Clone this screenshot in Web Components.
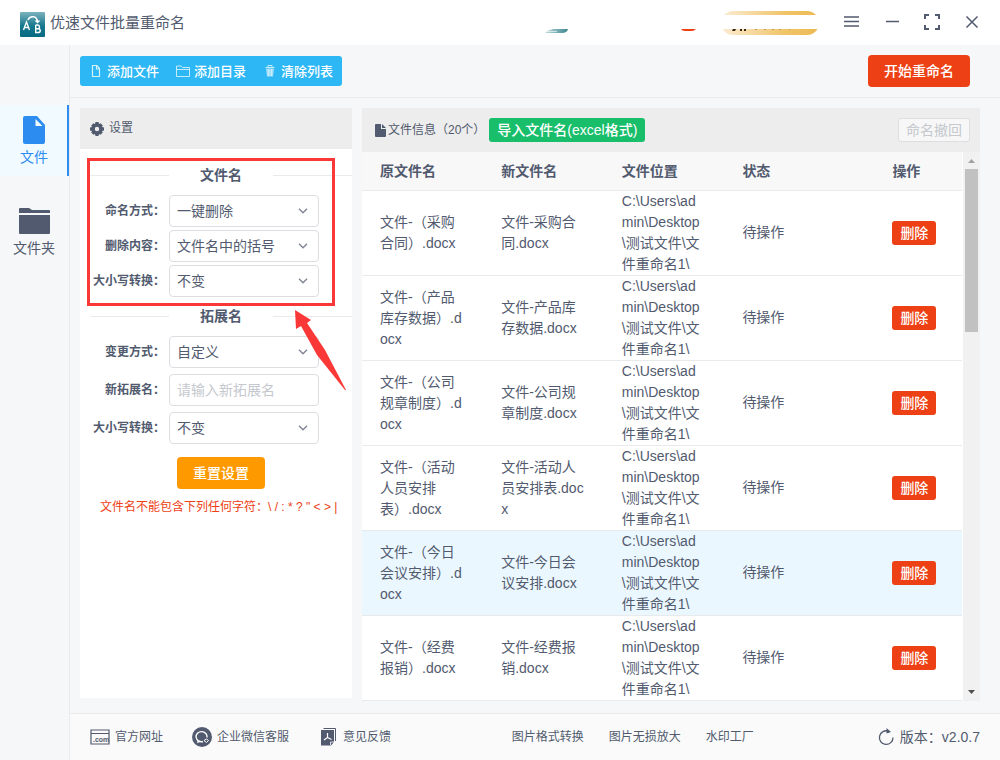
<!DOCTYPE html>
<html lang="zh-CN">
<head>
<meta charset="utf-8">
<title>优速文件批量重命名</title>
<style>
body { margin: 0; font: 14px/21px "Liberation Sans", "Noto Sans CJK SC", sans-serif; color: #515a6e; background: #f5f7f9; }
</style>
</head>
<body>
<rename-app></rename-app>
<script>
const BASE = `
*, *::before, *::after { box-sizing: border-box; }
button { font: inherit; color: inherit; border: 0; background: none; padding: 0; margin: 0; cursor: pointer; }
svg { display: block; flex: none; }
a { color: inherit; text-decoration: none; }`;

function define(name, css, html, setup) {
  customElements.define(name, class extends HTMLElement {
    connectedCallback() {
      if (this.shadowRoot) return;
      const root = this.attachShadow({ mode: 'open' });
      root.innerHTML = `<style>${BASE}${css}</style>${typeof html === 'function' ? html(this) : html}`;
      if (setup) setup(this, root);
    }
  });
}

/* Title bar */
define('title-bar', `
:host { display: flex; align-items: center; height: 45px; padding: 0 20px; background: #fff; }
h1 { margin: 0 auto 0 5px; font-size: 15px; font-weight: 400; line-height: 22px; }
.brand { margin-top: 4px; }
.promo { margin-right: 23px; }
nav { display: flex; gap: 24px; align-items: center; margin-bottom: 2px; }
nav button { display: block; }
`, `
<svg class="brand" width="25" height="25" viewBox="0 0 25 25"><defs><linearGradient id="g" x2="0" y2="1"><stop stop-color="#7db2bd"/><stop offset=".55" stop-color="#17798f"/><stop offset="1" stop-color="#066a82"/></linearGradient></defs><rect width="25" height="25" rx="1" fill="url(#g)"/><g fill="none" stroke="#fff" stroke-width="1.4"><path d="M3.5 18 6.5 10 9.5 18M4.500 15.500H8.500M15.700 13V20.500H18C21 20.500 21 16.800 18 16.800H15.700M15.700 13H17.800C20 13 20 16.800 18 16.800M8 8C9.500 3.500 17 3.500 17.500 9.500M15.500 8.500 17.500 10.500 19.500 8.500"/></g></svg>
<h1>优速文件批量重命名</h1>
<svg class="promo" width="276" height="24" viewBox="0 0 276 24"><defs><linearGradient id="p"><stop stop-color="#fbedd4"/><stop offset=".65" stop-color="#f0c469"/><stop offset="1" stop-color="#edba52"/></linearGradient><linearGradient id="s"><stop stop-color="#c2dcdf"/><stop offset="1" stop-color="#3b858f"/></linearGradient></defs>
<path d="M10 18H25Q24 22 19 22H2L4 20Z" fill="url(#s)"/><path d="M3 20.500H14" stroke="#fff" stroke-width=".6"/><path d="M138 18H153Q151 20 149 20H142Q139 20 138 18Z" fill="#ed4014"/>
<rect x="178" width="98" height="24" rx="12" fill="url(#p)"/><path d="M177 4H276V18H177Z" fill="#fff"/><path d="M190 18H193L192 20H189ZM197 18H199V20H197ZM201 18H203V20H201Z" fill="#3c2415"/><path d="M212 18.500H214M221 18.500H223M229 18.500H231M236 18.500H238M246 18.500H247" stroke="#c09d55"/></svg>
<nav>
<button aria-label="菜单"><svg width="18" height="18" viewBox="0 0 18 18"><path d="M2 4H17M2 8.500H17M2 13H17" stroke="#515a6e" stroke-width="1.500"/></svg></button>
<button aria-label="最小化"><svg width="16" height="18" viewBox="0 0 16 18"><path d="M2 8.500H15" stroke="#515a6e" stroke-width="1.500"/></svg></button>
<button aria-label="最大化"><svg width="16" height="18" viewBox="0 0 16 18"><path d="M1 6V2H5M11 2H15V6M15 12V16H11M5 16H1V12" fill="none" stroke="#515a6e" stroke-width="2"/></svg></button>
<button aria-label="关闭"><svg width="16" height="18" viewBox="0 0 16 18"><path d="M2.500 3.500 13.500 14.500M13.500 3.500 2.500 14.500" stroke="#515a6e" stroke-width="1.500"/></svg></button>
</nav>`);

/* Side navigation */
define('side-item', `
:host { display: block; height: 71px; border-right: 2px solid transparent; }
:host([active]) { background: #f0faff; border-color: #2d8cf0; color: #2d8cf0; }
button { display: flex; flex-direction: column; align-items: center; width: 100%; padding: 9px 0 0 1px; gap: 1px; }
.pic { display: flex; height: 32px; align-items: center; }
`, `<button><span class="pic"><slot name="icon"></slot></span><slot></slot></button>`);

define('side-nav', `
:host { display: flex; flex-direction: column; gap: 20px; padding-top: 60px; border-right: 1px solid #e8eaec; }
`, `
<side-item active><svg slot="icon" width="22" height="28" viewBox="0 0 22 28"><path d="M2 0H14L22 9V26Q22 28 20 28H2Q0 28 0 26V2Q0 0 2 0ZM12.500 3V10H19.500Z" fill="#2d8cf0" fill-rule="evenodd"/></svg>文件</side-item>
<side-item><svg slot="icon" width="31" height="26" viewBox="0 0 31 26"><path d="M0 5V1Q0 0 1 0H10L13 2H30Q31 2 31 3V5ZM0 7H31V25Q31 26 30 26H1Q0 26 0 25Z" fill="#515a6e"/></svg>文件夹</side-item>`);

/* Toolbar */
define('tool-bar', `
:host { display: flex; justify-content: space-between; align-items: center; height: 53px; padding: 0 30px 0 10px; border-bottom: 1px solid #e8eaec; }
.group { display: flex; gap: 17px; align-items: center; height: 30px; padding: 0 9px 0 10px; background: #2db7f5; color: #fff; border-radius: 3px; font-size: 13px; font-weight: 500; }
.group button { display: flex; align-items: center; gap: 4px; }
.start { height: 32px; padding: 0 16px; background: #ed4014; color: #fff; border-radius: 4px; font-weight: 500; }
`, `
<div class="group">
<button><svg width="13" height="14" viewBox="0 0 13 14"><path d="M2.500 1.500H7L9.500 4.500V12.500H2.500ZM6.500 1.500V5H9.500" fill="none" stroke="#d5f1fd" stroke-width="1.200"/></svg>添加文件</button>
<button><svg width="14" height="14" viewBox="0 0 14 14"><path d="M.5 12.500V2H5L6.500 3.500H13.500V12.500ZM.5 5.500H13.500" fill="none" stroke="#c5ecfd"/></svg>添加目录</button>
<button><svg width="14" height="14" viewBox="0 0 14 14"><path d="M3 4.500 4 12.500H10L11 4.500Z" fill="#a5e0fb"/><path d="M2.500 3.500H11.500M5 3V1.500H9V3M5.500 5V12M8.500 5V12" fill="none" stroke="#c5ecfd"/></svg>清除列表</button>
</div>
<button class="start">开始重命名</button>`);

/* One labelled control: a drop-down, or a text box when it has a hint */
define('form-field', `
:host { display: flex; align-items: center; height: 32px; }
label { width: 85px; text-align: right; font-size: 12px; font-weight: 700; margin-right: 4px; white-space: nowrap; }
.box { display: grid; width: 150px; }
select, input { grid-area: 1/1; width: 100%; height: 32px; padding: 0 8px 0 7px; margin: 0; border: 1px solid #dcdee2; border-radius: 4px; background: #fff; font: inherit; color: inherit; appearance: none; outline: 0; }
input::placeholder { color: #c5c8ce; opacity: 1; }
svg { grid-area: 1/1; place-self: center end; margin-right: 11px; pointer-events: none; }
`, el => `<label for="c">${el.getAttribute('label')}</label><span class="box">${
  el.hasAttribute('hint')
    ? `<input id="c" type="text" placeholder="${el.getAttribute('hint')}">`
    : `<select id="c"><option>${el.getAttribute('value')}</option></select><svg width="10" height="6" viewBox="0 0 10 6"><path d="M1 .7 5 4.700 9 .7" fill="none" stroke="#808695" stroke-width="1.400"/></svg>`
}</span>`);

define('group-title', `
:host { display: flex; align-items: center; height: 22px; margin-left: 10px; font-weight: 700; }
:host::before, :host::after { content: ""; flex: 1; height: 1px; background: #e8eaec; }
span { width: 104px; text-align: center; }
`, `<span><slot></slot></span>`);

/* Settings panel */
define('settings-panel', `
:host { display: block; position: relative; background: #fff; }
header { display: flex; align-items: center; gap: 5px; height: 41px; padding: 0 10px; background: #ededed; font-size: 12px; }
form { padding-top: 15px; }
.fields { display: grid; }
.name { gap: 3px; margin: 9px 0 8px; }
.ext { gap: 6px; margin: 9px 0 13px; }
.reset { display: block; width: 88px; height: 32px; margin: 0 auto 8px 97px; background: #ff9900; color: #fff; border-radius: 4px; font-weight: 500; }
p { margin: 0 0 0 20px; font-size: 12px; color: #ed4014; white-space: nowrap; }
.mark { position: absolute; left: 7px; top: 50px; pointer-events: none; }
`, `
<header><svg width="14" height="14" viewBox="0 0 14 14"><path d="M5.500 0H8.500L9 2 10.500 1.200 12.800 3.500 12 5 14 5.500V8.500L12 9 12.800 10.500 10.500 12.800 9 12 8.500 14H5.500L5 12 3.500 12.800 1.200 10.500 2 9 0 8.500V5.500L2 5 1.200 3.500 3.500 1.200 5 2ZM7 4.800A2.200 2.200 0 1 0 7 9.200 2.200 2.200 0 1 0 7 4.800Z" fill="#515a6e" fill-rule="evenodd"/></svg>设置</header>
<form>
<group-title>文件名</group-title>
<div class="fields name">
<form-field label="命名方式：" value="一键删除"></form-field>
<form-field label="删除内容：" value="文件名中的括号"></form-field>
<form-field label="大小写转换：" value="不变"></form-field>
</div>
<group-title>拓展名</group-title>
<div class="fields ext">
<form-field label="变更方式：" value="自定义"></form-field>
<form-field label="新拓展名：" hint="请输入新拓展名"></form-field>
<form-field label="大小写转换：" value="不变"></form-field>
</div>
<button class="reset" type="button">重置设置</button>
<p>文件名不能包含下列任何字符：\\ / : * ? " &lt; &gt; |</p>
</form>
<svg class="mark" width="262" height="234" viewBox="0 0 262 234"><rect x="1.500" y="1.500" width="245" height="145" fill="none" stroke="#fb3838" stroke-width="3"/><path d="M208 152 224 162 220 165 238 192 259 232 258 232 230 197 214 168 209 171Z" fill="#fb3838"/></svg>`);

/* File list panel */
const PATH = 'C:\\Users\\admin\\Desktop\\测试文件\\文件重命名1\\';
const FILES = [
  ['文件-（采购合同）.docx', '文件-采购合同.docx'],
  ['文件-（产品库存数据）.docx', '文件-产品库存数据.docx'],
  ['文件-（公司规章制度）.docx', '文件-公司规章制度.docx'],
  ['文件-（活动人员安排表）.docx', '文件-活动人员安排表.docx'],
  ['文件-（今日会议安排）.docx', '文件-今日会议安排.docx'],
  ['文件-（经费报销）.docx', '文件-经费报销.docx']
];

define('scroll-rail', `
:host { display: flex; flex-direction: column; align-items: center; width: 17px; margin-left: 1px; background: #f1f1f1; }
svg { height: 17px; }
i { width: 13px; height: 163px; background: #c1c1c1; margin-bottom: auto; }
`, `<svg width="17" height="17"><path d="M5 11H12L8.500 7Z" fill="#a3a3a3"/></svg><i></i><svg width="17" height="17"><path d="M5 6H12L8.500 10Z" fill="#505050"/></svg>`);

define('file-panel', `
:host { display: flex; flex-direction: column; min-width: 0; }
header { display: flex; align-items: center; height: 44px; padding: 0 10px 0 13px; background: #ededed; font-size: 12px; }
header svg { margin-right: 2px; }
header button { height: 24px; padding: 0 8px; border-radius: 3px; font-size: 14px; }
.import { margin-left: 4px; background: #19be6b; color: #fff; font-weight: 500; }
.undo { margin-left: auto; padding: 0 7px; background: #f7f7f7; border: 1px solid #dcdee2; color: #c5c8ce; }
.body { display: flex; flex: 1; background: #fff; }
table { flex: 1; min-width: 0; table-layout: fixed; border-spacing: 0; width: 100%; }
th, td { padding: 0 20px 0 18px; text-align: left; border-bottom: 1px solid #e8eaec; word-break: break-all; }
th { height: 39px; background: #f8f8f9; font-weight: 700; }
td { height: 85px; }
td:nth-child(4) { padding-bottom: 2px; }
.on td { background: #ebf7ff; }
td button { display: block; height: 24px; padding: 0 8px; background: #ed4014; color: #fff; border-radius: 3px; font-weight: 500; }
`, () => `
<header><svg width="11" height="13" viewBox="0 0 11 13"><path d="M1 0H6V5H11V12Q11 13 10 13H1Q0 13 0 12V1Q0 0 1 0ZM7 0 11 4H7Z" fill="#515a6e"/></svg>文件信息（20个）<button class="import">导入文件名(excel格式)</button><button class="undo" disabled>命名撤回</button></header>
<div class="body"><table>
<colgroup><col style="width:20.2%"><col style="width:20.1%"><col style="width:20.1%"><col style="width:25%"><col style="width:14.6%"></colgroup>
<thead><tr><th>原文件名</th><th>新文件名</th><th>文件位置</th><th>状态</th><th>操作</th></tr></thead>
<tbody>${FILES.map((f, i) => `<tr class="${i === 4 ? 'on' : ''}"><td>${f[0]}</td><td>${f[1]}</td><td>${PATH}</td><td>待操作</td><td><button>删除</button></td></tr>`).join('')}</tbody>
</table><scroll-rail></scroll-rail></div>`);

/* Footer */
define('foot-bar', `
:host { display: flex; align-items: center; height: 47px; padding: 0 20px; background: #fafafa; border-top: 1px solid #e8eaec; font-size: 12px; }
a { display: flex; align-items: center; gap: 5px; white-space: nowrap; }
.left { display: flex; gap: 29px; }
.right { display: flex; gap: 25px; margin-left: auto; }
.ver { margin-left: 124px; font-size: 14px; }
.dot { font: 700 7px "Liberation Sans", sans-serif; }
`, `
<div class="left">
<a href="#"><svg width="20" height="16" viewBox="0 0 20 16"><path d="M1 1H19V15H1ZM1 4.500H19" fill="none" stroke="#515a6e" stroke-width="1.200"/><text class="dot" x="3" y="12.500" fill="#515a6e">.com</text></svg>官方网址</a>
<a href="#"><svg width="20" height="20" viewBox="0 0 20 20"><circle cx="10" cy="10" r="10" fill="#515a6e"/><path d="M15 10.500A5.500 5 0 1 0 11 14.500M6 13V15L8 14" fill="none" stroke="#fff" stroke-width="1.400"/><path d="M12 13.500 14.500 12 16.500 13.500 14.500 15.500Z" fill="none" stroke="#fff"/></svg>企业微信客服</a>
<a href="#"><svg width="20" height="18" viewBox="-3 0 20 18"><path d="M2.500 .5H14.500V13" fill="none" stroke="#515a6e"/><path d="M0 2H13V14L10 17.500H0Z" fill="#515a6e"/><path d="M6.500 5V9.500L3 12M6.500 9.500 10.500 11.500" fill="none" stroke="#fff" stroke-width="1.200"/><path d="M9.500 17V14H13" fill="none" stroke="#fff" stroke-width=".8"/></svg>意见反馈</a>
</div>
<div class="right"><a href="#">图片格式转换</a><a href="#">图片无损放大</a><a href="#">水印工厂</a></div>
<a class="ver" href="#"><svg width="17" height="18" viewBox="0 0 17 18"><path d="M10.500 3.200A6.800 6.800 0 1 0 15 9.500" fill="none" stroke="#515a6e" stroke-width="1.300"/><path d="M8.500 0 13 4 8.500 5.500Z" fill="#515a6e"/></svg>版本：v2.0.7</a>`);

/* Whole window */
define('rename-app', `
:host { display: flex; flex-direction: column; min-height: 100vh; }
.frame { display: grid; grid-template-columns: 70px minmax(0, 1fr); flex: 1; }
main { display: flex; flex-direction: column; }
.work { display: grid; grid-template-columns: 272px minmax(0, 1fr); gap: 10px; flex: 1; padding: 10px 20px 12px 10px; }
settings-panel { margin-bottom: 3px; }
`, `
<title-bar></title-bar>
<div class="frame"><side-nav></side-nav>
<main><tool-bar></tool-bar><div class="work"><settings-panel></settings-panel><file-panel></file-panel></div><foot-bar></foot-bar></main></div>`);
</script>
</body>
</html>
